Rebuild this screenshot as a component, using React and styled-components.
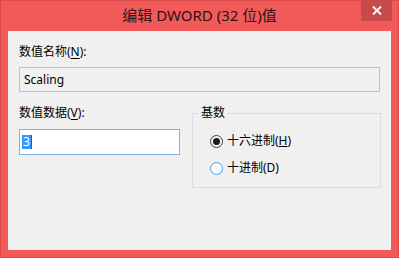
import React from 'react';
import styled, { createGlobalStyle } from 'styled-components';

const GlobalStyle = createGlobalStyle`
  html, body {
    margin: 0;
    padding: 0;
    background: #ffffff;
  }
  body {
    font-family: "Noto Sans", "Noto Sans CJK SC", sans-serif;
  }
`;

const Window = styled.div`
  width: 399px;
  height: 258px;
  box-sizing: border-box;
  border: 1px solid #d94b4b;
  background: #f25a5a;
  display: flex;
  flex-direction: column;
`;

const TitleBar = styled.div`
  height: 30px;
  display: grid;
  grid-template-columns: 1fr auto 1fr;
  align-items: start;
`;

const Title = styled.div`
  grid-column: 2;
  font-family: "Noto Sans", "Noto Sans CJK SC", sans-serif;
  font-size: 15px;
  line-height: 29px;
  color: #2a1414;
  white-space: nowrap;
`;

const CloseButton = styled.div`
  grid-column: 3;
  justify-self: end;
  width: 31px;
  height: 21px;
  margin: -1px 6px 0 0;
  background: #c74b4b;
  display: flex;
  align-items: center;
  justify-content: center;
`;

const Client = styled.div`
  flex: 1;
  margin: 0 7px 7px 7px;
  background: #f0f0f0;
  padding: 13px 10px 0 11px;
  font-size: 12px;
  line-height: 16px;
  color: #000;
`;

const Label = styled.div`
  margin-bottom: ${({ $gap }) => $gap}px;
  white-space: nowrap;
  u {
    text-decoration: underline;
    text-underline-offset: 2px;
  }
`;

const TextBox = styled.div`
  box-sizing: border-box;
  width: ${({ $width }) => $width};
  height: ${({ $height }) => $height}px;
  border: 1px solid ${({ $focused }) => ($focused ? '#7eb4ea' : '#c2c2c2')};
  background: ${({ $focused }) => ($focused ? '#ffffff' : '#f0f0f0')};
  padding: 0 4px 0 ${({ $focused }) => ($focused ? 2 : 4)}px;
  display: flex;
  align-items: center;
  font-size: 12px;
`;

const Selected = styled.span`
  background: #3399ff;
  color: #ffffff;
  line-height: 14px;
  padding: 0 1px;
`;

const Caret = styled.span`
  width: 1px;
  height: 14px;
  background: #7a4a10;
`;

const Row = styled.div`
  margin-top: 13px;
  display: grid;
  grid-template-columns: 161px 189px;
  column-gap: 12px;
  align-items: start;
`;

const GroupBox = styled.fieldset`
  margin: 0;
  box-sizing: border-box;
  height: 83px;
  border: 1px solid #dcdcdc;
  padding: 0 0 0 6px;
  min-width: 0;
`;

const Legend = styled.legend`
  padding: 0 2px;
  font-size: 12px;
  line-height: 16px;
`;

const RadioList = styled.div`
  margin-top: 12px;
  display: flex;
  flex-direction: column;
  gap: 11px;
  padding-left: 11px;
`;

const RadioRow = styled.div`
  display: flex;
  align-items: center;
  gap: 4px;
  height: 16px;
`;

const RadioCircle = styled.span`
  box-sizing: border-box;
  width: 13px;
  height: 13px;
  border-radius: 50%;
  border: 1px solid ${({ $checked }) => ($checked ? '#3c3c3c' : '#4d9be0')};
  background: ${({ $checked }) => ($checked ? '#f6f6f6' : '#f7fbff')};
  display: flex;
  align-items: center;
  justify-content: center;
  &::after {
    content: '';
    display: ${({ $checked }) => ($checked ? 'block' : 'none')};
    width: 7px;
    height: 7px;
    border-radius: 50%;
    background: #1a1a1a;
  }
`;

const CloseIcon = () => (
  <svg width="10" height="9" viewBox="0 0 10 9">
    <path d="M1 0.5 L9 8.5 M9 0.5 L1 8.5" stroke="#ffffff" strokeWidth="1.8" />
  </svg>
);

const Radio = ({ checked, children }) => (
  <RadioRow>
    <RadioCircle $checked={checked} />
    <span>{children}</span>
  </RadioRow>
);

export default function App() {
  return (
    <>
      <GlobalStyle />
      <Window>
        <TitleBar>
          <Title>编辑 DWORD (32 位)值</Title>
          <CloseButton>
            <CloseIcon />
          </CloseButton>
        </TitleBar>
        <Client>
          <Label $gap={7}>
            数值名称(<u>N</u>):
          </Label>
          <TextBox $width="361px" $height={25}>
            Scaling
          </TextBox>
          <Row>
            <div>
              <Label $gap={8}>
                数值数据(<u>V</u>):
              </Label>
              <TextBox $width="161px" $height={26} $focused>
                <Selected>3</Selected>
                <Caret />
              </TextBox>
            </div>
            <GroupBox>
              <Legend>基数</Legend>
              <RadioList>
                <Radio checked>
                  十六进制(<u>H</u>)
                </Radio>
                <Radio>十进制(D)</Radio>
              </RadioList>
            </GroupBox>
          </Row>
        </Client>
      </Window>
    </>
  );
}
